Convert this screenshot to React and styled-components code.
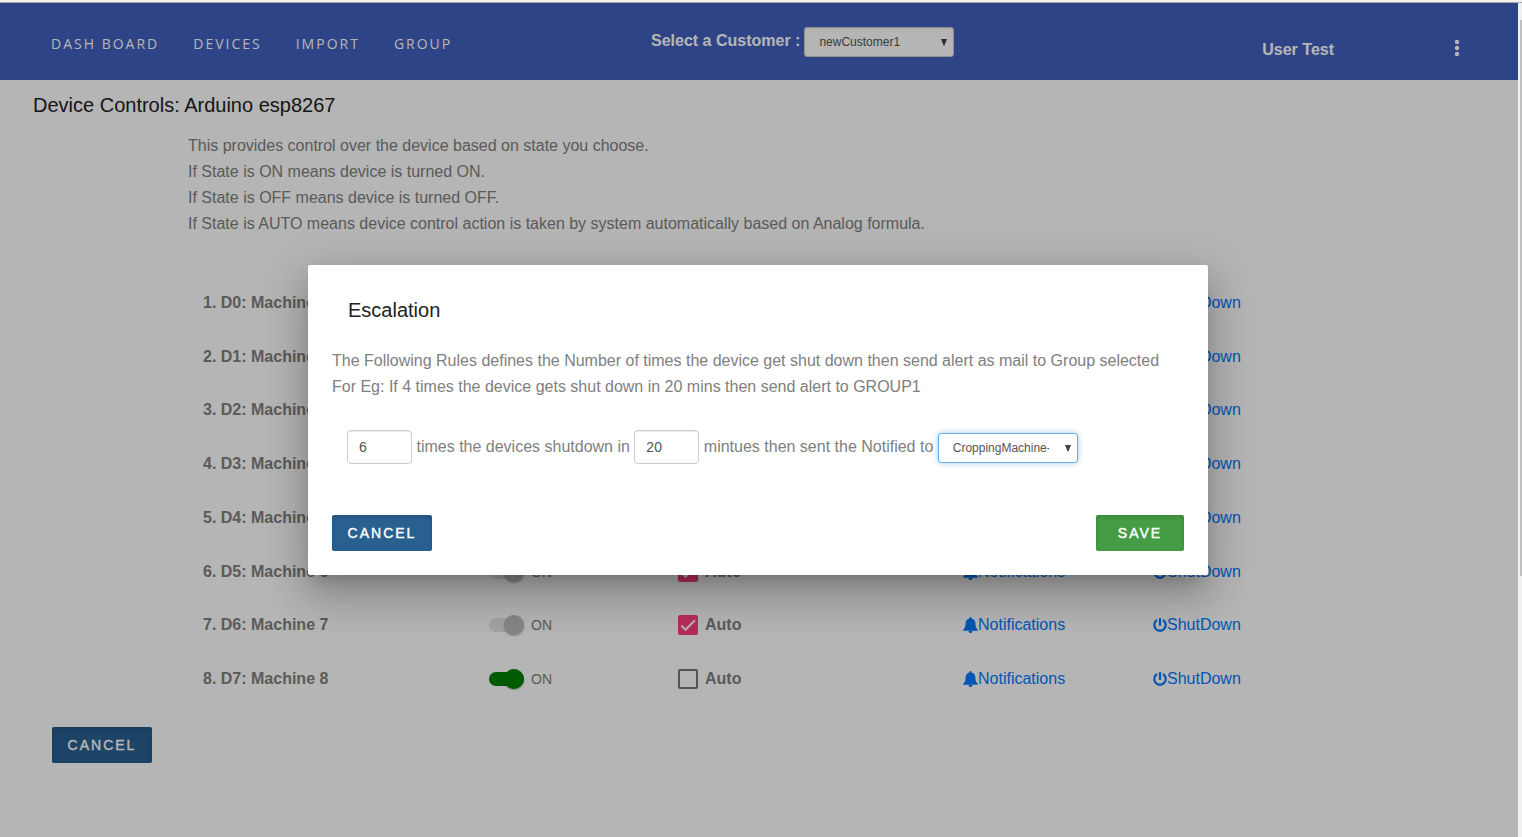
import React from 'react';
import styled, { createGlobalStyle } from 'styled-components';
import { FaBell, FaPowerOff } from 'react-icons/fa';

const GlobalStyle = createGlobalStyle`
  *, *::before, *::after { box-sizing: border-box; }
  body {
    margin: 0;
    font-family: "Liberation Sans", Arial, sans-serif;
    font-size: 16px;
    line-height: 26px;
    color: #808080;
    background: #f0f0f0;
  }
  h1, h2, p, ul { margin: 0; padding: 0; }
`;

const Shell = styled.div`
  display: flex;
  min-height: 100vh;
  padding-top: 2px;
`;

const Page = styled.div`
  position: relative;
  flex: 1;
  min-width: 0;
  padding-right: 2px;
  border-top: 1px solid #a8a8a8;
  background: #ffffff;
`;

const ScrollTrack = styled.div`
  width: 4px;
  padding: 17px 0 0 2px;
  border-top: 1px solid #a8a8a8;
  background: #f0f0f0;
`;

const ScrollThumb = styled.div`
  height: 556px;
  background: #c0c0c0;
`;

const Header = styled.header`
  display: flex;
  align-items: center;
  height: 77px;
  margin-right: -2px;
  padding: 0 53px 0 51px;
  background: #4161be;
`;

const Nav = styled.nav`
  display: flex;
  flex: 0 0 600px;
  gap: 34px;
  padding-top: 4px;
`;

const NavLink = styled.a`
  font-family: "Open Sans", sans-serif;
  font-size: 14px;
  letter-spacing: 2px;
  color: #ffffff;
  text-decoration: none;
  white-space: nowrap;
`;

const CustomerPicker = styled.div`
  display: flex;
  align-items: baseline;
  gap: 4px;
  flex: 1;
  font-weight: bold;
  color: #ffffff;
`;

const UserName = styled.span`
  padding: 17px 115px 0 0;
  font-weight: bold;
  color: #ffffff;
`;

const MenuButton = styled.button`
  display: flex;
  padding: 13px 0 0;
  border: 0;
  background: none;
  color: #ffffff;
`;

const SelectWrap = styled.span`
  position: relative;
  display: inline-block;
`;

const Select = styled.select`
  appearance: none;
  display: block;
  width: ${(p) => p.$width};
  height: 30px;
  padding: 0 28px 0 14px;
  border: 1px solid ${(p) => (p.$active ? '#66afe9' : '#cccccc')};
  border-radius: 3px;
  box-shadow: ${(p) => (p.$active ? '0 0 6px rgba(102, 175, 233, 0.6)' : 'inset 0 1px 1px rgba(0, 0, 0, 0.08)')};
  background: #ffffff;
  font: 12px "Liberation Sans", Arial, sans-serif;
  color: #555555;
  outline: none;
`;

const Arrow = styled.svg`
  position: absolute;
  top: 12px;
  right: 7px;
  pointer-events: none;
`;

const Title = styled.h1`
  padding: 12px 33px;
  font-size: 20px;
  font-weight: normal;
  color: #212121;
`;

const Container = styled.div`
  max-width: 1140px;
  margin: 0 auto;
`;

const Intro = styled.p`
  padding: 3px 0 39px;
`;

const DeviceList = styled.ul`
  display: grid;
  grid-template-rows: repeat(8, 1fr);
  height: 430px;
  list-style: none;
`;

const DeviceRow = styled.li`
  display: grid;
  grid-template-columns: 3fr 2fr 3fr 2fr 2fr;
  align-items: center;
`;

const Cell = styled.div`
  padding: 0 15px;
  white-space: nowrap;
`;

const DeviceName = styled(Cell)`
  font-weight: bold;
`;

const ControlLabel = styled.label`
  display: flex;
  align-items: center;
  gap: 7px;
  font-size: ${(p) => (p.$strong ? '16px' : '14px')};
  font-weight: ${(p) => (p.$strong ? 'bold' : 'normal')};
`;

const Toggle = styled.input`
  appearance: none;
  display: flex;
  align-items: center;
  justify-content: flex-end;
  width: 35px;
  height: 14px;
  margin: 0 0 0 1px;
  border-radius: 7px;
  background: #e6e6e6;

  &::after {
    content: "";
    width: 20px;
    height: 20px;
    flex: none;
    border-radius: 50%;
    background: #bdbdbd;
    box-shadow: 0 1px 2px rgba(0, 0, 0, 0.3);
  }
  &:enabled, &:enabled::after { background: #008000; }
`;

const CheckBox = styled.span`
  display: grid;
  width: 20px;
  height: 20px;

  > * { grid-area: 1 / 1; }
`;

const CheckInput = styled.input`
  appearance: none;
  width: 20px;
  height: 20px;
  margin: 0;
  border: 2px solid #757575;
  border-radius: 2px;

  &:checked { border-color: #ff4081; background: #ff4081; }
  & + svg { visibility: hidden; pointer-events: none; }
  &:checked + svg { visibility: visible; }
`;

const ActionLink = styled.a`
  display: flex;
  align-items: center;
  color: #007bff;
  text-decoration: none;
`;

const BellIcon = styled.svg`
  width: 15px;
  height: 16px;
`;

const PowerIcon = styled(FaPowerOff)`
  width: 14px;
  height: 14px;
`;

const Button = styled.button`
  height: 36px;
  min-width: ${(p) => (p.$kind === 'save' ? '88px' : '100px')};
  padding: 0 14px;
  border: 0;
  border-radius: 2px;
  background: ${(p) => (p.$kind === 'save' ? '#449d44' : '#286090')};
  box-shadow: inset 0 2px 4px rgba(0, 0, 0, 0.16);
  font: 500 14px "Liberation Sans", Arial, sans-serif;
  -webkit-text-stroke: 0.03em currentColor;
  letter-spacing: 2px;
  color: #ffffff;
`;

const PageFooter = styled.footer`
  padding: 21px 52px;
`;

const Backdrop = styled.div`
  position: absolute;
  inset: 0;
  display: flex;
  align-items: center;
  justify-content: center;
  padding-right: 2px;
  background: rgba(0, 0, 0, 0.29);
`;

const Dialog = styled.section`
  width: 900px;
  max-width: 90%;
  padding: 24px;
  border-radius: 2px;
  background: #ffffff;
  box-shadow:
    0 11px 15px -7px rgba(0, 0, 0, 0.2),
    0 24px 38px 3px rgba(0, 0, 0, 0.14),
    0 9px 46px 8px rgba(0, 0, 0, 0.12);
`;

const DialogTitle = styled.h2`
  padding: 8px 16px 25px;
  font-size: 20px;
  font-weight: normal;
  color: #212121;
`;

const RuleForm = styled.form`
  padding: 30px 15px 51px;
`;

const NumberField = styled.input`
  width: 65px;
  height: 34px;
  padding: 0 11px;
  border: 1px solid #cccccc;
  border-radius: 4px;
  box-shadow: inset 0 1px 1px rgba(0, 0, 0, 0.08);
  background: #ffffff;
  font: 14px "Liberation Sans", Arial, sans-serif;
  color: #555555;
`;

const DialogActions = styled.div`
  display: flex;
  justify-content: space-between;
`;

function DropDown({ id, label, options, width, active }) {
  return (
    <SelectWrap>
      <Select id={id} aria-label={label} $width={width} $active={active}>
        {options.map((o) => <option key={o}>{o}</option>)}
      </Select>
      <Arrow width="6" height="7" viewBox="0 0 6 7" fill="#444444" aria-hidden="true">
        <path d="M0 0h6L3.4 6.4h-.8z" />
      </Arrow>
    </SelectWrap>
  );
}

const devices = Array.from({ length: 8 }, (_, i) => ({
  name: `${i + 1}. D${i}: Machine ${i + 1}`,
  auto: i < 7,
}));

function Device({ name, auto }) {
  return (
    <DeviceRow>
      <DeviceName>{name}</DeviceName>
      <Cell>
        <ControlLabel>
          <Toggle type="checkbox" role="switch" defaultChecked disabled={auto} />
          ON
        </ControlLabel>
      </Cell>
      <Cell>
        <ControlLabel $strong>
          <CheckBox>
            <CheckInput type="checkbox" defaultChecked={auto} />
            <svg width="20" height="20" viewBox="0 0 24 24" fill="none" stroke="#fafafa" strokeWidth="2.6" aria-hidden="true">
              <path d="M4.1 12.7 9 17.6 20.3 6.3" />
            </svg>
          </CheckBox>
          Auto
        </ControlLabel>
      </Cell>
      <Cell>
        <ActionLink href="#notifications">
          <BellIcon viewBox="0 0 15 16" fill="currentColor" aria-hidden="true">
            <path d="M7.5 0a1 1 0 0 1 1 1v.4c2.4.5 3.9 2.3 3.9 4.8 0 3.6.9 5.3 2.5 6.6 0 .6-.5 1-1 1H1.100c-.6 0-1-.4-1-1 1.600-1.300 2.500-3 2.500-6.600 0-2.500 1.500-4.300 3.900-4.800V1a1 1 0 0 1 1-1zM5.500 14.100h4a2 2 0 0 1-4 0z" />
          </BellIcon>
          Notifications
        </ActionLink>
      </Cell>
      <Cell>
        <ActionLink href="#shutdown"><PowerIcon />ShutDown</ActionLink>
      </Cell>
    </DeviceRow>
  );
}

export default function App() {
  return (
    <>
      <GlobalStyle />
      <Shell>
        <Page>
          <Header>
            <Nav>
              <NavLink href="#dashboard">DASH BOARD</NavLink>
              <NavLink href="#devices">DEVICES</NavLink>
              <NavLink href="#import">IMPORT</NavLink>
              <NavLink href="#group">GROUP</NavLink>
            </Nav>
            <CustomerPicker>
              <label htmlFor="customer">Select a Customer :</label>
              <DropDown id="customer" options={['newCustomer1']} width="150px" />
            </CustomerPicker>
            <UserName>User Test</UserName>
            <MenuButton type="button" aria-label="More options">
              <svg width="16" height="16" viewBox="0 0 16 16" fill="currentColor">
                <circle cx="8" cy="2" r="2.2" />
                <circle cx="8" cy="8" r="2.2" />
                <circle cx="8" cy="14" r="2.2" />
              </svg>
            </MenuButton>
          </Header>
          <main>
            <Title>Device Controls: Arduino esp8267</Title>
            <Container>
              <Intro>
                This provides control over the device based on state you choose.<br />
                If State is ON means device is turned ON.<br />
                If State is OFF means device is turned OFF.<br />
                If State is AUTO means device control action is taken by system automatically based on Analog formula.
              </Intro>
              <DeviceList>
                {devices.map((d) => <Device key={d.name} {...d} />)}
              </DeviceList>
            </Container>
          </main>
          <PageFooter>
            <Button type="button">CANCEL</Button>
          </PageFooter>
          <Backdrop>
            <Dialog role="dialog" aria-modal="true" aria-labelledby="dialog-title">
              <DialogTitle id="dialog-title">Escalation</DialogTitle>
              <p>
                The Following Rules defines the Number of times the device get shut down then send alert as mail to Group selected
                <br />
                For Eg: If 4 times the device gets shut down in 20 mins then send alert to GROUP1
              </p>
              <RuleForm>
                <NumberField id="times" type="text" defaultValue="6" />{' '}
                <label htmlFor="times">times the devices shutdown in</label>{' '}
                <NumberField id="minutes" type="text" defaultValue="20" />{' '}
                <label htmlFor="minutes">mintues then sent the Notified to</label>{' '}
                <DropDown label="Group" options={['CroppingMachine-Group']} width="140px" active />
              </RuleForm>
              <DialogActions>
                <Button type="button">CANCEL</Button>
                <Button type="button" $kind="save">SAVE</Button>
              </DialogActions>
            </Dialog>
          </Backdrop>
        </Page>
        <ScrollTrack><ScrollThumb /></ScrollTrack>
      </Shell>
    </>
  );
}
